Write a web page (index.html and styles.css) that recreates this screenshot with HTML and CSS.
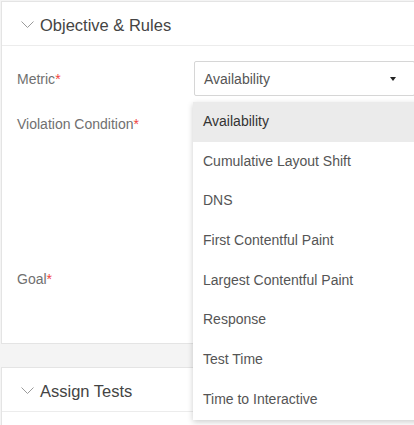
FILE: index.html
```html
<!DOCTYPE html>
<html lang="en">
<head>
  <meta charset="UTF-8" />
  <title>Objective &amp; Rules</title>
  <link rel="stylesheet" href="styles.css">
</head>
<body>
  <div class="page">
    <section class="card">
      <div class="card-head">
        <svg class="chev" width="13" height="8" viewBox="0 0 13 8"><polyline points="0.5,0.5 6.5,6.5 12.5,0.5" fill="none" stroke="#9a9a9a" stroke-width="1"/></svg>
        <span>Objective &amp; Rules</span>
      </div>
      <div class="card-body">
        <div class="row row-metric">
          <label>Metric<i>*</i></label>
          <div class="control">
            <div class="select">
              <span>Availability</span>
              <b class="caret"></b>
            </div>
            <ul class="menu">
              <li class="active">Availability</li>
              <li>Cumulative Layout Shift</li>
              <li>DNS</li>
              <li>First Contentful Paint</li>
              <li>Largest Contentful Paint</li>
              <li>Response</li>
              <li>Test Time</li>
              <li>Time to Interactive</li>
            </ul>
          </div>
        </div>
        <div class="row row-cond">
          <label>Violation Condition<i>*</i></label>
          <div class="control"></div>
        </div>
        <div class="row row-goal">
          <label>Goal<i>*</i></label>
          <div class="control"></div>
        </div>
      </div>
    </section>

    <section class="card">
      <div class="card-head">
        <svg class="chev" width="13" height="8" viewBox="0 0 13 8"><polyline points="0.5,0.5 6.5,6.5 12.5,0.5" fill="none" stroke="#9a9a9a" stroke-width="1"/></svg>
        <span>Assign Tests</span>
      </div>
      <div class="card-body"></div>
    </section>
  </div>
</body>
</html>
```

FILE: styles.css
```css
html, body { margin: 0; overflow: hidden; }
body { background: #f4f4f4; font-family: "Liberation Sans", Arial, sans-serif; font-size: 14px; color: #707070; }
.page { width: 440px; padding: 1px 0 0 1px; }
.card { background: #fff; border: 1px solid #e4e4e4; margin-bottom: 23px; }
.card-head { height: 40px; padding: 3px 0 0 19px; display: flex; align-items: center; border-bottom: 1px solid #ececec; font-size: 16.5px; color: #444; }
.chev { margin-right: 6px; margin-top: -1px; }
.card-body { padding: 15px 15px 48px; }
.row { display: flex; }
.row label { width: 177px; flex: none; }
.row label i { font-style: normal; color: #f0443e; }
.control { flex: 1; position: relative; }
.row-metric { height: 35px; }
.row-metric label { line-height: 36px; }
.row-cond { height: 140px; margin-top: 12px; }
.row-cond label { padding-top: 6px; line-height: 20px; }
.row-goal { height: 35px; margin-top: 12px; }
.row-goal label { line-height: 38px; }
.select { height: 33px; border: 1px solid #d6d6d6; border-radius: 2px; display: flex; align-items: center; padding: 0 9px; color: #555; width: 201px; }
.select span { flex: 1; }
.caret { width: 0; height: 0; border-left: 3.5px solid transparent; border-right: 3.5px solid transparent; border-top: 4px solid #222; margin-right: 9px; }
.menu { position: absolute; top: 41px; left: -1px; width: 240px; margin: 0; padding: 0; list-style: none; background: #fff; box-shadow: 0 2px 6px rgba(0, 0, 0, 0.2); z-index: 2; }
.menu li { height: 39.7px; line-height: 39px; padding-left: 10px; color: #555; }
.menu li.active { background: #ebebeb; color: #333; }
```
